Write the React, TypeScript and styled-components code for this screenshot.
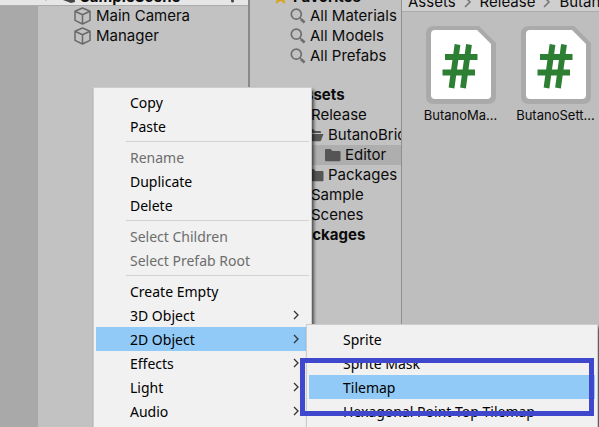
import React from "react";
import styled, { createGlobalStyle } from "styled-components";

const GlobalStyle = createGlobalStyle`
  * { box-sizing: border-box; }
  body { margin: 0; overflow: hidden; background: #c2c2c2; }
  ul { list-style: none; margin: 0; padding: 0; }
`;

const Editor = styled.main`
  position: relative;
  display: grid;
  grid-template-columns: 250fr 152fr 197fr;
  height: 100vh;
  overflow: hidden;
  font-family: Inter, sans-serif;
  font-size: 15px;
  line-height: 20px;
  color: #0b0b0b;
  white-space: nowrap;
`;

const Hierarchy = styled.section`
  display: flex;
  flex-direction: column;
  min-width: 0;
  border-right: 2px solid #8a8a8a;
  background: #c2c2c2;
`;

const SceneRow = styled.header`
  display: flex;
  align-items: flex-end;
  gap: 4px;
  height: 6px;
  padding-left: 42px;
  padding-right: 14px;
  overflow: hidden;
  background: #e6e6e6;
  border-bottom: 1px solid #acacac;
  font-weight: 700;
  line-height: 16px;
  svg { flex: none; }
`;

const SceneName = styled.span`
  flex: 1;
`;

const HierarchyBody = styled.div`
  flex: 1;
  display: flex;
`;

const Gutter = styled.div`
  width: 38px;
  background: #a9a9a9;
`;

const ObjectRow = styled.li`
  display: flex;
  align-items: center;
  gap: 4px;
  height: 20px;
  padding-left: 35px;
`;

const Tree = styled.nav`
  min-width: 0;
  overflow: hidden;
  border-right: 1px solid #8f8f8f;
  background: #c2c2c2;
`;

const ClippedTop = styled.div`
  display: flex;
  flex-direction: column;
  justify-content: flex-end;
  height: 6px;
  overflow: hidden;
`;

const TreeGroup = styled.ul`
  & + & { margin-top: 19px; }
`;

const TreeRow = styled.li<{ $depth: number; $selected?: boolean }>`
  display: flex;
  flex: none;
  align-items: center;
  gap: 4px;
  height: 20px;
  padding-left: ${(p) => 23 + p.$depth * 17}px;
  font-weight: ${(p) => (p.$depth === 0 ? 700 : 400)};
  background: ${(p) => (p.$selected ? "#aeaeae" : "transparent")};
  svg { flex: none; }
`;

const FavoritesRow = styled(TreeRow)`
  height: 18px;
`;

const Browser = styled.section`
  min-width: 0;
  overflow: hidden;
  background: #bebebe;
`;

const Breadcrumb = styled.header`
  display: flex;
  align-items: flex-end;
  gap: 8px;
  height: 12px;
  padding: 0 6px;
  overflow: hidden;
  background: #cfcfcf;
  border-bottom: 1px solid #acacac;
  line-height: 18px;
  svg { flex: none; }
`;

const Files = styled.ul`
  display: flex;
  padding: 13px 0 0 11px;
`;

const FileCell = styled.li`
  display: flex;
  flex: none;
  flex-direction: column;
  align-items: center;
  width: 95px;
  font-size: 13px;
`;

const Menu = styled.div<{ $sub?: boolean }>`
  position: absolute;
  left: ${(p) => (p.$sub ? 306 : 93)}px;
  top: ${(p) => (p.$sub ? 324 : 87)}px;
  width: ${(p) => (p.$sub ? 292 : 219)}px;
  padding: 2px 2px 8px;
  border: 1px solid #cccccc;
  background: #f1f1f1;
  box-shadow: 2px 3px 3px rgba(0, 0, 0, 0.6);
  font-family: "Noto Sans", sans-serif;
  font-size: 14px;
`;

const MenuItem = styled.button<{ $active?: boolean }>`
  display: flex;
  align-items: center;
  justify-content: space-between;
  width: 100%;
  height: 24px;
  padding: 0 10px 0 34px;
  border: 0;
  background: ${(p) => (p.$active ? "#91c9f7" : "transparent")};
  color: #000;
  font: inherit;
  text-align: left;
  white-space: nowrap;
  &:disabled { color: #6d6d6d; }
`;

const MenuLabel = styled.span`
  padding-top: 2px;
`;

const Separator = styled.hr`
  height: 1px;
  margin: 3px 0 3px 30px;
  border: 0;
  background: #d2d2d2;
`;

const Highlight = styled.div`
  position: absolute;
  left: 300px;
  top: 358px;
  width: 294px;
  height: 58px;
  border: 5px solid #3f48cc;
  pointer-events: none;
`;

const CubeIcon = () => (
  <svg width="19" height="20" viewBox="0 0 19 20" fill="none" stroke="#6a6a6a" strokeWidth="1.5" strokeLinejoin="round">
    <path d="M9.5 2 17 5.3v9L9.5 18 2 14.3v-9zM2 5.3l7.5 3.5L17 5.3M9.5 8.8V18" />
  </svg>
);

const SearchIcon = () => (
  <svg width="16" height="18" viewBox="0 0 16 18" fill="none" stroke="#6f6f6f">
    <circle cx="6.3" cy="7.2" r="5" strokeWidth="1.7" />
    <path d="M9.8 10.9l1.4 1.4" strokeWidth="1.6" />
    <path d="M11 12.2l3.6 3.3" strokeWidth="2.8" />
  </svg>
);

const StarIcon = () => (
  <svg width="16" height="18" viewBox="0 0 16 18" fill="#d9a520">
    <path d="M7.5 1l2 5.2 5.5.3-4.3 3.6L12.5 16l-5-3-5 3 1.800-5.900L0 6.500l5.500-.3z" />
  </svg>
);

const FolderIcon = ({ open }: { open?: boolean }) => (
  <svg width="17" height="16" viewBox="0 0 17 16" fill="#555">
    {open ? (
      <path d="M1 3q0-1 1-1h4l2 2h5q1 0 1 1v1H4.5L1 11zM4.8 7H16.5L14 13.5q-.3.7-1 .7H1.5z" />
    ) : (
      <path d="M1 3q0-1 1-1h4.5l2 2H15.5q1 0 1 1v8.2q0 1-1 1H2q-1 0-1-1z" />
    )}
  </svg>
);

const UnityIcon = () => (
  <svg width="16" height="20" viewBox="0 0 16 20" fill="#444">
    <path d="M1 12l7-7 6 1 1 11-4 1-8-3z" />
  </svg>
);

const FoldArrow = () => (
  <svg width="14" height="20" viewBox="0 0 14 20" fill="#777">
    <path d="M0 8h8l-4 8z" />
  </svg>
);

const DotsIcon = () => (
  <svg width="3" height="20" viewBox="0 0 3 20" fill="#444">
    <circle cx="1.5" cy="6" r="1.5" />
    <circle cx="1.5" cy="11" r="1.5" />
    <circle cx="1.5" cy="16" r="1.5" />
  </svg>
);

const CrumbArrow = () => (
  <svg width="8" height="18" viewBox="0 0 8 18" fill="none" stroke="#777" strokeWidth="1.6">
    <path d="M1 4l5 5-5 5" />
  </svg>
);

const Chevron = () => (
  <svg width="6" height="10" viewBox="0 0 6 10" fill="none" stroke="#333" strokeWidth="1.3">
    <path d="M1 1l4 4-4 4" />
  </svg>
);

const ScriptIcon = () => (
  <svg width="72" height="80" viewBox="0 0 72 80">
    <path d="M9 1H54L71 18V71q0 8-8 8H9q-8 0-8-8V9q0-8 8-8z" fill="#aaaaaa" />
    <path d="M10 5H52L66 19V70q0 4-4 4H10q-4 0-4-4V9q0-4 4-4z" fill="#fff" />
    <path
      d="M32.5 19.5 26.500 63M44 19.500 38 63M20 32H52.500M17.500 47.500H50"
      fill="none"
      stroke="#2d7f34"
      strokeWidth="5.800"
    />
  </svg>
);

type Entry = { label: string; off?: boolean; arrow?: boolean; active?: boolean } | null;

const contextEntries: Entry[] = [
  { label: "Copy" },
  { label: "Paste" },
  null,
  { label: "Rename", off: true },
  { label: "Duplicate" },
  { label: "Delete" },
  null,
  { label: "Select Children", off: true },
  { label: "Select Prefab Root", off: true },
  null,
  { label: "Create Empty" },
  { label: "3D Object", arrow: true },
  { label: "2D Object", arrow: true, active: true },
  { label: "Effects", arrow: true },
  { label: "Light", arrow: true },
  { label: "Audio", arrow: true },
];

const objectEntries: Entry[] = [
  { label: "Sprite" },
  { label: "Sprite Mask" },
  { label: "Tilemap", active: true },
  { label: "Hexagonal Point Top Tilemap" },
];

const folders = [
  { label: "Assets", depth: 0, open: true },
  { label: "Release", depth: 1, open: true },
  { label: "ButanoBridge", depth: 2, open: true },
  { label: "Editor", depth: 3, selected: true },
  { label: "Packages", depth: 2 },
  { label: "Sample", depth: 1 },
  { label: "Scenes", depth: 1 },
  { label: "Packages", depth: 0 },
];

const MenuList = ({ entries, sub }: { entries: Entry[]; sub?: boolean }) => (
  <Menu role="menu" $sub={sub}>
    {entries.map((e, i) =>
      e ? (
        <MenuItem key={i} type="button" role="menuitem" disabled={e.off} $active={e.active}>
          <MenuLabel>{e.label}</MenuLabel>
          {e.arrow && <Chevron />}
        </MenuItem>
      ) : (
        <Separator key={i} />
      )
    )}
  </Menu>
);

export default function App() {
  return (
    <>
      <GlobalStyle />
      <Editor>
        <Hierarchy>
          <SceneRow>
            <FoldArrow />
            <UnityIcon />
            <SceneName>SampleScene</SceneName>
            <DotsIcon />
          </SceneRow>
          <HierarchyBody>
            <Gutter />
            <ul>
              {["Main Camera", "Manager"].map((name) => (
                <ObjectRow key={name}>
                  <CubeIcon />
                  {name}
                </ObjectRow>
              ))}
            </ul>
          </HierarchyBody>
        </Hierarchy>
        <Tree>
          <ClippedTop>
            <FavoritesRow as="div" $depth={0}>
              <StarIcon />
              Favorites
            </FavoritesRow>
          </ClippedTop>
          <TreeGroup>
            {["All Materials", "All Models", "All Prefabs"].map((name) => (
              <TreeRow key={name} $depth={1}>
                <SearchIcon />
                {name}
              </TreeRow>
            ))}
          </TreeGroup>
          <TreeGroup>
            {folders.map((f, i) => (
              <TreeRow key={i} $depth={f.depth} $selected={f.selected}>
                <FolderIcon open={f.open} />
                {f.label}
              </TreeRow>
            ))}
          </TreeGroup>
        </Tree>
        <Browser>
          <Breadcrumb>
            <span>Assets</span>
            <CrumbArrow />
            <span>Release</span>
            <CrumbArrow />
            <span>ButanoBridge</span>
          </Breadcrumb>
          <Files>
            {["ButanoMa...", "ButanoSett..."].map((name) => (
              <FileCell key={name}>
                <ScriptIcon />
                {name}
              </FileCell>
            ))}
          </Files>
        </Browser>
        <MenuList entries={contextEntries} />
        <MenuList entries={objectEntries} sub />
        <Highlight />
      </Editor>
    </>
  );
}
